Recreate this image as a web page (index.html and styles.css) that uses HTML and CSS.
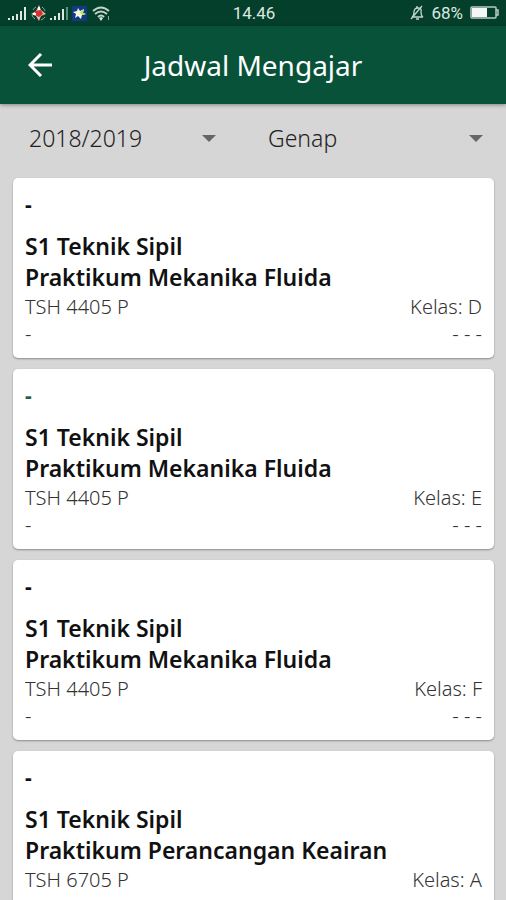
FILE: index.html
```html
<!DOCTYPE html>
<html lang="id">
<head>
<meta charset="utf-8">
<meta name="viewport" content="width=device-width, initial-scale=1">
<title>Jadwal Mengajar</title>
<link rel="stylesheet" href="styles.css">
</head>
<body>
<div class="status">
  <div class="status-left">
    <svg width="104" height="20" viewBox="0 0 104 20" aria-hidden="true">
      <g fill="#dce8e0">
        <path d="M0 15h2v2H0zM4 13h2v4H4zM8 11h2v6H8zM12 8h2v9h-2zM16 4h2v13h-2z"/>
        <path d="M42 15h2v2h-2zM46 13h2v4h-2zM50 10h2v7h-2zM54 6h2v11h-2z"/>
      </g>
      <path fill="#5d9075" d="M58 4h2v13h-2z"/>
      <path d="M25 7a7 7 0 0 1 3-3M34 4a7 7 0 0 1 3 4M37 14a7 7 0 0 1-4 3M27 16a7 7 0 0 1-3-4" fill="none" stroke="#8da99b" stroke-width="1"/>
      <path fill="#f3b5b0" d="m31 2 2 5 5 4-5 2-2 5-3-5-5-2 5-3z"/>
      <path fill="#d43330" d="m27 8 6-1 2 4-4 3-4-2z"/>
      <path fill="#fff" d="M30 4h2v3h-2zM25 10h3v2h-3z"/>
      <rect x="64" y="3" width="15" height="15" rx="1" fill="#0f3a86"/>
      <path fill="#f6f7dc" d="m70 5 2 3 4-2-1 4 3 1-4 1-1 4-3-3-3 2 1-4-3-2 4-1z"/>
      <path fill="#c3e45b" d="m73 8 3-2-1 4 3 1-4 1-2-2z"/>
      <g fill="none" stroke="#c2d3ca" stroke-width="2">
        <path d="M85 8q8-7 16 0M87 11q6-5 12 0M90 14q3-3 6 0"/>
      </g>
      <path fill="#dce8e0" d="m91 15 2-1 2 1-2 3z"/>
      <path fill="#8da99b" d="M100 13h1v4h-1z"/>
    </svg>
  </div>
  <time>14.46</time>
  <div class="status-right">
    <svg width="14" height="16" viewBox="0 0 14 16" fill="none" stroke="#c2d3ca" aria-hidden="true">
      <path d="M2 12q2-1 2-5 0-4 4-4t3 4q0 4 2 5zM6 14h3M7 1v2M1 14 12 1" stroke-width="1.3"/>
    </svg>
    <span>68%</span>
    <svg width="30" height="14" viewBox="0 0 30 14" aria-hidden="true">
      <rect x="1" y="1" width="25" height="11" rx="1" fill="none" stroke="#b9cbc1" stroke-width="1.5"/>
      <path fill="#f4f7f5" d="M2 2h15v9H2z"/>
      <path fill="none" stroke="#b9cbc1" stroke-width="1.5" d="M26 4h2v5h-2"/>
    </svg>
  </div>
</div>
<header class="appbar">
  <button class="back" type="button" aria-label="Kembali">
    <svg width="24" height="24" viewBox="0 0 24 24" fill="none" stroke="#fff" stroke-width="3" aria-hidden="true">
      <path d="M24 12H3M13 1 2 12l11 11"/>
    </svg>
  </button>
  <h1>Jadwal Mengajar</h1>
</header>
<main>
  <form class="filters">
    <div class="field">
      <select aria-label="Tahun ajaran"><option>2018/2019</option></select>
      <svg width="14" height="7" viewBox="0 0 14 7" aria-hidden="true"><path d="M0 0h14L7 7z"/></svg>
    </div>
    <div class="field">
      <select aria-label="Semester"><option>Genap</option></select>
      <svg width="14" height="7" viewBox="0 0 14 7" aria-hidden="true"><path d="M0 0h14L7 7z"/></svg>
    </div>
  </form>
  <div class="cards">
    <article class="card">
      <p class="day">-</p>
      <h2>S1 Teknik Sipil<br>Praktikum Mekanika Fluida</h2>
      <p class="row"><span>TSH 4405 P</span><span>Kelas: D</span></p>
      <p class="row"><span>-</span><span>- - -</span></p>
    </article>
    <article class="card">
      <p class="day day-green">-</p>
      <h2>S1 Teknik Sipil<br>Praktikum Mekanika Fluida</h2>
      <p class="row"><span>TSH 4405 P</span><span>Kelas: E</span></p>
      <p class="row"><span>-</span><span>- - -</span></p>
    </article>
    <article class="card">
      <p class="day">-</p>
      <h2>S1 Teknik Sipil<br>Praktikum Mekanika Fluida</h2>
      <p class="row"><span>TSH 4405 P</span><span>Kelas: F</span></p>
      <p class="row"><span>-</span><span>- - -</span></p>
    </article>
    <article class="card">
      <p class="day">-</p>
      <h2>S1 Teknik Sipil<br>Praktikum Perancangan Keairan</h2>
      <p class="row"><span>TSH 6705 P</span><span>Kelas: A</span></p>
    </article>
  </div>
</main>
</body>
</html>
```
FILE: styles.css
```css
* { box-sizing: border-box; }

html { height: 100%; }

body {
  height: 100%;
  margin: 0;
  display: flex;
  flex-direction: column;
  overflow: hidden;
  background: #d6d6d6;
  color: #111;
  font-family: "Noto Sans", "Open Sans", sans-serif;
}

h1, h2, p { margin: 0; }
svg { display: block; }

.status {
  flex: none;
  display: grid;
  grid-template-columns: 1fr auto 1fr;
  align-items: center;
  height: 26px;
  padding: 0 6px 0 8px;
  background: #033f2a;
  color: #dce8e0;
  font-family: Roboto, sans-serif;
  font-size: 17px;
  line-height: 26px;
}

.status-right {
  display: flex;
  justify-content: flex-end;
  align-items: center;
  gap: 7px;
}

.appbar {
  flex: none;
  display: grid;
  grid-template-columns: 80px 1fr 80px;
  align-items: center;
  height: 78px;
  background: #075239;
  color: #fff;
  box-shadow: 0 1px 4px rgba(0, 0, 0, 0.4);
}

.back {
  justify-self: center;
  padding: 0;
  border: 0;
  background: none;
}

h1 {
  font-size: 28px;
  font-weight: 400;
  line-height: 40px;
  text-align: center;
}

main {
  flex: 1;
  min-height: 0;
  overflow: hidden;
}

.filters {
  display: grid;
  grid-template-columns: 187fr 215fr;
  gap: 52px;
  height: 74px;
  padding: 0 23px 6px 29px;
  align-items: center;
}

.field { display: grid; align-items: center; }

.field > * { grid-area: 1 / 1; }

.field select {
  width: 100%;
  height: 40px;
  padding: 0;
  border: 0;
  appearance: none;
  background: none;
  color: #222;
  font: 300 23px "Noto Sans", "Open Sans", sans-serif;
}

.field svg {
  justify-self: end;
  fill: #666;
  pointer-events: none;
}

.cards {
  display: flex;
  flex-direction: column;
  gap: 11px;
  padding: 0 12px 11px 13px;
}

.card {
  flex: none;
  min-height: 180px;
  padding: 12px 12px 11px;
  border-radius: 5px;
  background: #fff;
  box-shadow: 0 1px 2px rgba(0, 0, 0, 0.35);
}

.day {
  margin-bottom: 12px;
  font-size: 21px;
  font-weight: 700;
  line-height: 29px;
}

.day-green { color: #2c5a4b; }

h2 {
  font-size: 23px;
  font-weight: 600;
  line-height: 31px;
}

.row {
  display: flex;
  justify-content: space-between;
  color: #333;
  font-size: 20px;
  font-weight: 300;
  line-height: 27px;
}
```
